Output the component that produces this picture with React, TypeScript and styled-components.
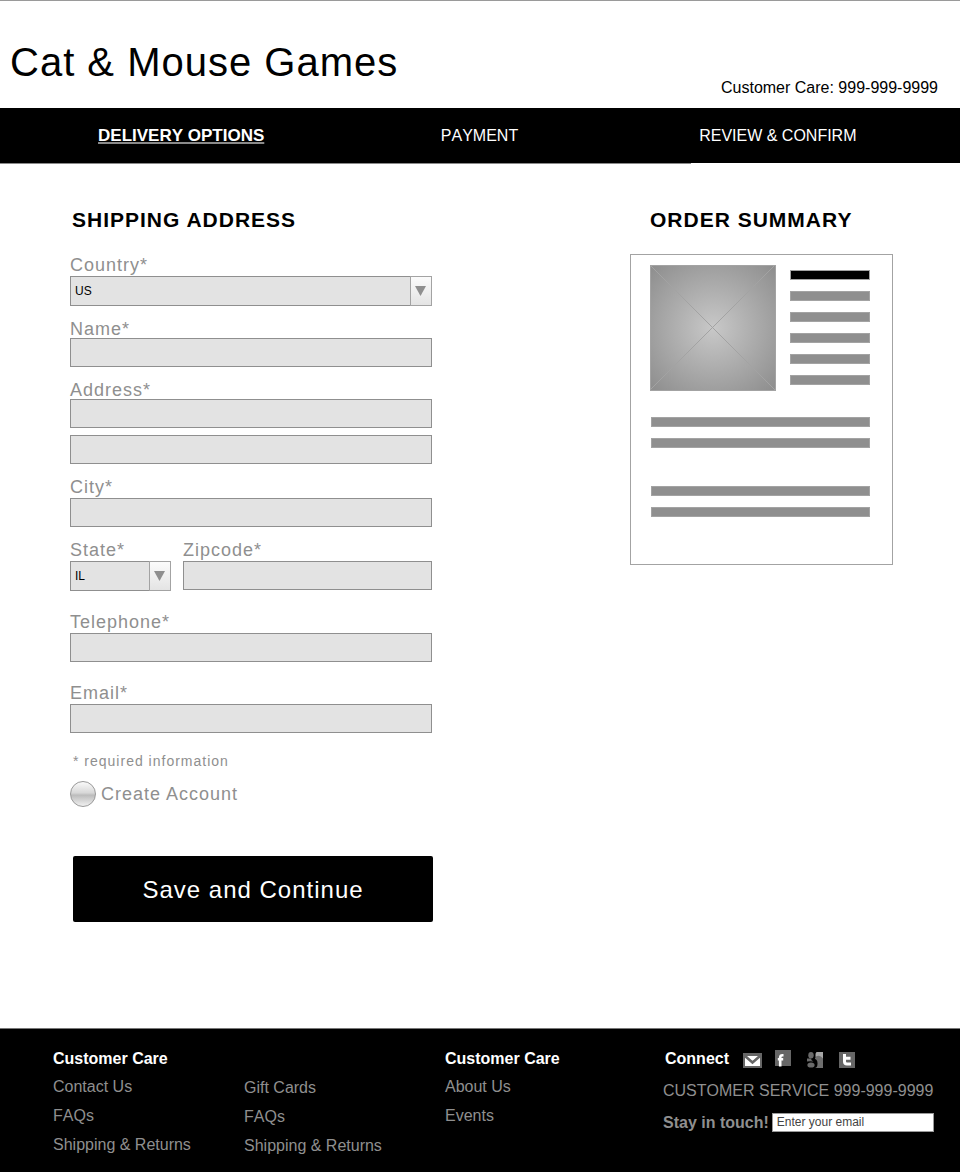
import React from "react";
import styled, { createGlobalStyle } from "styled-components";

const ink = "#000";
const muted = "#8f8f8f";
const line = "#a3a3a3";

const GlobalStyle = createGlobalStyle`
  * { box-sizing: border-box; }
  body {
    margin: 0;
    background: #fff;
    color: ${ink};
    font: 16px/18px "Liberation Sans", Arial, sans-serif;
    font-kerning: none;
  }
  input, select, button { font-family: inherit; font-kerning: none; }
`;

const Page = styled.div`
  display: flex;
  flex-direction: column;
  min-height: 100vh;
`;

const Header = styled.header`
  display: flex;
  flex-wrap: wrap;
  align-items: flex-end;
  justify-content: space-between;
  padding: 38px 22px 11px 10px;
  border-top: 1px solid #9a9a9a;
`;

const Brand = styled.h1`
  margin: 0 0 12px;
  font-size: 40px;
  line-height: 46px;
  font-weight: 400;
  letter-spacing: 1px;
`;

const Steps = styled.nav`
  display: grid;
  grid-template-columns: repeat(3, 1fr);
  padding: 19px 33px 18px 32px;
  background: ${ink};
  text-align: center;
`;

const Step = styled.a<{ $current?: boolean }>`
  color: #fff;
  font-size: ${(p) => (p.$current ? 17 : 16)}px;
  font-weight: ${(p) => (p.$current ? 700 : 400)};
  text-decoration: ${(p) => (p.$current ? "underline 2px #8a8a8a" : "none")};
  text-underline-offset: 1px;
  text-decoration-skip-ink: none;
`;

const Progress = styled.div`
  width: 72%;
  height: 1px;
  background: #8a8a8a;
`;

const Main = styled.main`
  flex: 1;
  display: flex;
  flex-wrap: wrap;
  align-items: flex-start;
  justify-content: space-between;
  gap: 44px;
  padding: 44px 67px 106px 70px;
`;

const Title = styled.h2<{ $inset: number; $after: number }>`
  margin: 0 0 ${(p) => p.$after}px;
  padding-left: ${(p) => p.$inset}px;
  font-size: 21px;
  line-height: 24px;
  letter-spacing: 1px;
  font-kerning: normal;
`;

const Form = styled.form`
  flex: 0 1 363px;
`;

const Fields = styled.div<{ $gap: number }>`
  display: flex;
  flex-direction: column;
  gap: ${(p) => p.$gap}px;
  padding-right: 1px;
`;

const Field = styled.div<{ $tight?: boolean }>`
  display: flex;
  flex-direction: column;
  gap: ${(p) => (p.$tight ? 0 : 2)}px;
`;

const Label = styled.label`
  color: ${muted};
  font-size: 18px;
  line-height: 18px;
  letter-spacing: 1px;
  font-kerning: normal;
`;

const TextBox = styled.input`
  width: 100%;
  height: 29px;
  padding: 0 4px;
  border: 1px solid ${muted};
  border-radius: 0;
  background: #e3e3e3;
  font-size: 12px;
`;

const SecondLine = styled(TextBox)`
  margin-top: 7px;
`;

const SelectBox = styled.div`
  position: relative;
`;

const Select = styled.select`
  display: block;
  appearance: none;
  width: 100%;
  height: 30px;
  padding: 0 26px 0 4px;
  border: 1px solid ${muted};
  border-radius: 0;
  background: #e3e3e3;
  color: ${ink};
  font-size: 12px;
`;

const Arrow = styled.span`
  position: absolute;
  inset: 0 0 0 auto;
  width: 22px;
  display: grid;
  place-items: center;
  border: 1px solid ${line};
  background: linear-gradient(#fbfbfb, #e4e4e4);
  pointer-events: none;
`;

const StateZip = styled.div`
  display: grid;
  grid-template-columns: 101px 1fr;
  gap: 12px;
`;

const ContactFields = styled(Fields)`
  margin-top: 22px;
`;

const Note = styled.p`
  margin: 20px 0 12px 3px;
  color: ${muted};
  font-size: 14px;
  line-height: 16px;
  letter-spacing: 1px;
`;

const AccountChoice = styled.div`
  display: flex;
  align-items: center;
  gap: 5px;
`;

const Radio = styled.input`
  appearance: none;
  width: 26px;
  height: 26px;
  margin: 0;
  border: 1px solid #999;
  border-radius: 50%;
  background: linear-gradient(#fafafa, #d8d8d8 45%, #bcbcbc 55%, #c8c8c8 65%, #f0f0f0);
  &:checked { box-shadow: inset 0 0 0 7px #ddd; background: #333; }
`;

const SaveButton = styled.button`
  display: block;
  width: calc(100% - 3px);
  margin: 49px 0 0 3px;
  padding: 20px 0 18px;
  border: 0;
  border-radius: 2px;
  background: ${ink};
  color: #fff;
  font-size: 24px;
  line-height: 28px;
  letter-spacing: 1px;
`;

const Summary = styled.section`
  flex: 0 1 263px;
`;

const Card = styled.div`
  padding: 10px 22px 47px 19px;
  border: 1px solid ${line};
`;

const Product = styled.div`
  display: flex;
  gap: 14px;
  margin-bottom: 26px;
`;

const Bars = styled.div<{ $before?: number; $inset?: number }>`
  flex: 1;
  display: flex;
  flex-direction: column;
  gap: 11px;
  padding-top: ${(p) => p.$before ?? 0}px;
  padding-left: ${(p) => p.$inset ?? 0}px;
`;

const Bar = styled.div<{ $dark?: boolean }>`
  height: 10px;
  border: 1px solid ${line};
  background: ${(p) => (p.$dark ? ink : muted)};
`;

const Footer = styled.footer`
  display: grid;
  grid-template-columns: 191fr 201fr 218fr 271fr;
  padding: 21px 26px 18px 53px;
  border-top: 1px solid #777;
  background: ${ink};
  color: ${muted};
`;

const FooterTitle = styled.h3`
  margin: 0;
  color: #fff;
  font-size: 16px;
  line-height: 18px;
`;

const Links = styled.ul<{ $before: number }>`
  display: flex;
  flex-direction: column;
  gap: 11px;
  margin: ${(p) => p.$before}px 0 0;
  padding: 0;
  list-style: none;
`;

const FooterLink = styled.a`
  color: ${muted};
  text-decoration: none;
`;

const ConnectRow = styled.div`
  display: flex;
  gap: 14px;
  padding-left: 2px;
`;

const Socials = styled.div`
  display: flex;
  align-items: flex-end;
  gap: 16px;
`;

const Social = styled.a`
  display: block;
  width: 16px;
  height: 16px;
  svg { display: block; overflow: visible; }
`;

const Service = styled.p`
  margin: 14px 0 13px;
  white-space: nowrap;
`;

const Newsletter = styled.form`
  display: flex;
  align-items: center;
  gap: 3px;
  label { flex: none; font-weight: 700; }
`;

const EmailBox = styled.input`
  flex: 1;
  min-width: 0;
  height: 19px;
  padding: 0 4px 1px;
  border: 1px solid #999;
  background: #fff;
  font-size: 12px;
  &::placeholder { color: #444; opacity: 1; }
`;

function Dropdown({ id, options }: { id: string; options: string[] }) {
  return (
    <SelectBox>
      <Select id={id}>
        {options.map((o) => (
          <option key={o}>{o}</option>
        ))}
      </Select>
      <Arrow>
        <svg width="12" height="10" viewBox="0 0 12 10" aria-hidden="true">
          <path d="M0 0H11L5.500 10Z" fill={muted} />
        </svg>
      </Arrow>
    </SelectBox>
  );
}

function ProductImage() {
  return (
    <svg width="126" height="126" viewBox="0 0 126 126" role="img" aria-label="Product">
      <defs>
        <radialGradient id="shade" cx="50%" cy="50%" r="68%">
          <stop offset="0" stopColor="#c8c8c8" />
          <stop offset="1" stopColor="#8f8f8f" />
        </radialGradient>
      </defs>
      <rect x="0.500" y="0.500" width="125" height="125" fill="url(#shade)" stroke={line} />
      <path d="M0 0L125 125M125 0L0 125" stroke={line} />
    </svg>
  );
}

function LinkList({ items, before }: { items: string[]; before: number }) {
  return (
    <Links $before={before}>
      {items.map((t) => (
        <li key={t}>
          <FooterLink href="#">{t}</FooterLink>
        </li>
      ))}
    </Links>
  );
}

export default function App() {
  return (
    <Page>
      <GlobalStyle />
      <Header>
        <Brand>Cat &amp; Mouse Games</Brand>
        <span>Customer Care: 999-999-9999</span>
      </Header>
      <Steps>
        <div><Step href="#" $current aria-current="step">DELIVERY OPTIONS</Step></div>
        <div><Step href="#">PAYMENT</Step></div>
        <div><Step href="#">REVIEW &amp; CONFIRM</Step></div>
      </Steps>
      <Progress />

      <Main>
        <Form onSubmit={(e) => e.preventDefault()}>
          <Title $inset={2} $after={24}>SHIPPING ADDRESS</Title>
          <Fields $gap={14}>
            <Field>
              <Label htmlFor="country">Country*</Label>
              <Dropdown id="country" options={["US", "Canada"]} />
            </Field>
            <Field $tight>
              <Label htmlFor="name">Name*</Label>
              <TextBox id="name" />
            </Field>
            <Field $tight>
              <Label htmlFor="address">Address*</Label>
              <TextBox id="address" />
              <SecondLine aria-label="Address line 2" />
            </Field>
            <Field>
              <Label htmlFor="city">City*</Label>
              <TextBox id="city" />
            </Field>
            <StateZip>
              <Field>
                <Label htmlFor="state">State*</Label>
                <Dropdown id="state" options={["IL", "IN", "WI"]} />
              </Field>
              <Field>
                <Label htmlFor="zip">Zipcode*</Label>
                <TextBox id="zip" />
              </Field>
            </StateZip>
          </Fields>
          <ContactFields $gap={22}>
            <Field>
              <Label htmlFor="phone">Telephone*</Label>
              <TextBox id="phone" type="tel" />
            </Field>
            <Field>
              <Label htmlFor="email">Email*</Label>
              <TextBox id="email" type="email" />
            </Field>
          </ContactFields>
          <Note>* required information</Note>
          <AccountChoice>
            <Radio id="create" type="radio" name="account" />
            <Label htmlFor="create">Create Account</Label>
          </AccountChoice>
          <SaveButton type="submit">Save and Continue</SaveButton>
        </Form>

        <Summary>
          <Title $inset={20} $after={22}>ORDER SUMMARY</Title>
          <Card>
            <Product>
              <ProductImage />
              <Bars $before={5}>
                <Bar $dark />
                <Bar />
                <Bar />
                <Bar />
                <Bar />
                <Bar />
              </Bars>
            </Product>
            <Bars $inset={1}>
              <Bar />
              <Bar />
            </Bars>
            <Bars $before={38} $inset={1}>
              <Bar />
              <Bar />
            </Bars>
          </Card>
        </Summary>
      </Main>

      <Footer>
        <div>
          <FooterTitle>Customer Care</FooterTitle>
          <LinkList before={10} items={["Contact Us", "FAQs", "Shipping & Returns"]} />
        </div>
        <LinkList before={29} items={["Gift Cards", "FAQs", "Shipping & Returns"]} />
        <div>
          <FooterTitle>Customer Care</FooterTitle>
          <LinkList before={10} items={["About Us", "Events"]} />
        </div>
        <div>
          <ConnectRow>
            <FooterTitle>Connect</FooterTitle>
            <Socials>
              <Social href="#" aria-label="Email">
                <svg width="16" height="16" viewBox="0 0 16 16">
                  <rect x="0" y="1" width="19" height="15" fill="#666" />
                  <rect x="2" y="4" width="15" height="10" fill="#fff" />
                  <path d="M2 4L9.500 10.500L17 4" fill="none" stroke="#666" strokeWidth="2.600" />
                  <path d="M5 4H14L9.500 8.300Z" fill="#fff" />
                </svg>
              </Social>
              <Social href="#" aria-label="Facebook">
                <svg width="16" height="16" viewBox="0 0 16 16">
                  <rect x="0" y="-2" width="16" height="16" fill="#666" />
                  <path d="M8.500 3.200H7.500Q5.200 3.200 5.200 5.500V14.500M2.800 7.200H8.200" fill="none" stroke="#fff" strokeWidth="2.600" />
                </svg>
              </Social>
              <Social href="#" aria-label="Google">
                <svg width="16" height="16" viewBox="0 0 16 16">
                  <rect x="8" width="8" height="16" fill="#6e6e6e" />
                  <path d="M8 0H16V6.500Q13 2.500 9 4.500H8Z" fill="#a6a6a6" />
                  <ellipse cx="7.500" cy="11.500" rx="3" ry="4.500" fill="#000" />
                  <path d="M6.500 0H9.500Q8 1.500 8.500 3.500Q9 6 7 7.500Z" fill="#000" />
                  <ellipse cx="4" cy="3.200" rx="2.700" ry="3.200" fill="#6a6a6a" />
                  <path d="M0 6.500H4Q4 8.500 6.500 9.500Q3 9 0 9.500Z" fill="#6a6a6a" />
                  <ellipse cx="4" cy="13" rx="3.600" ry="2.600" fill="#6a6a6a" />
                </svg>
              </Social>
              <Social href="#" aria-label="Twitter">
                <svg width="16" height="16" viewBox="0 0 16 16">
                  <rect width="16" height="16" fill="#666" />
                  <path d="M5.500 2V9.500Q5.500 12 8 12H12M5.500 6.200H11.500" fill="none" stroke="#fff" strokeWidth="3" />
                </svg>
              </Social>
            </Socials>
          </ConnectRow>
          <Service>CUSTOMER SERVICE 999-999-9999</Service>
          <Newsletter onSubmit={(e) => e.preventDefault()}>
            <label htmlFor="signup">Stay in touch!</label>
            <EmailBox id="signup" type="email" placeholder="Enter your email" />
          </Newsletter>
        </div>
      </Footer>
    </Page>
  );
}
